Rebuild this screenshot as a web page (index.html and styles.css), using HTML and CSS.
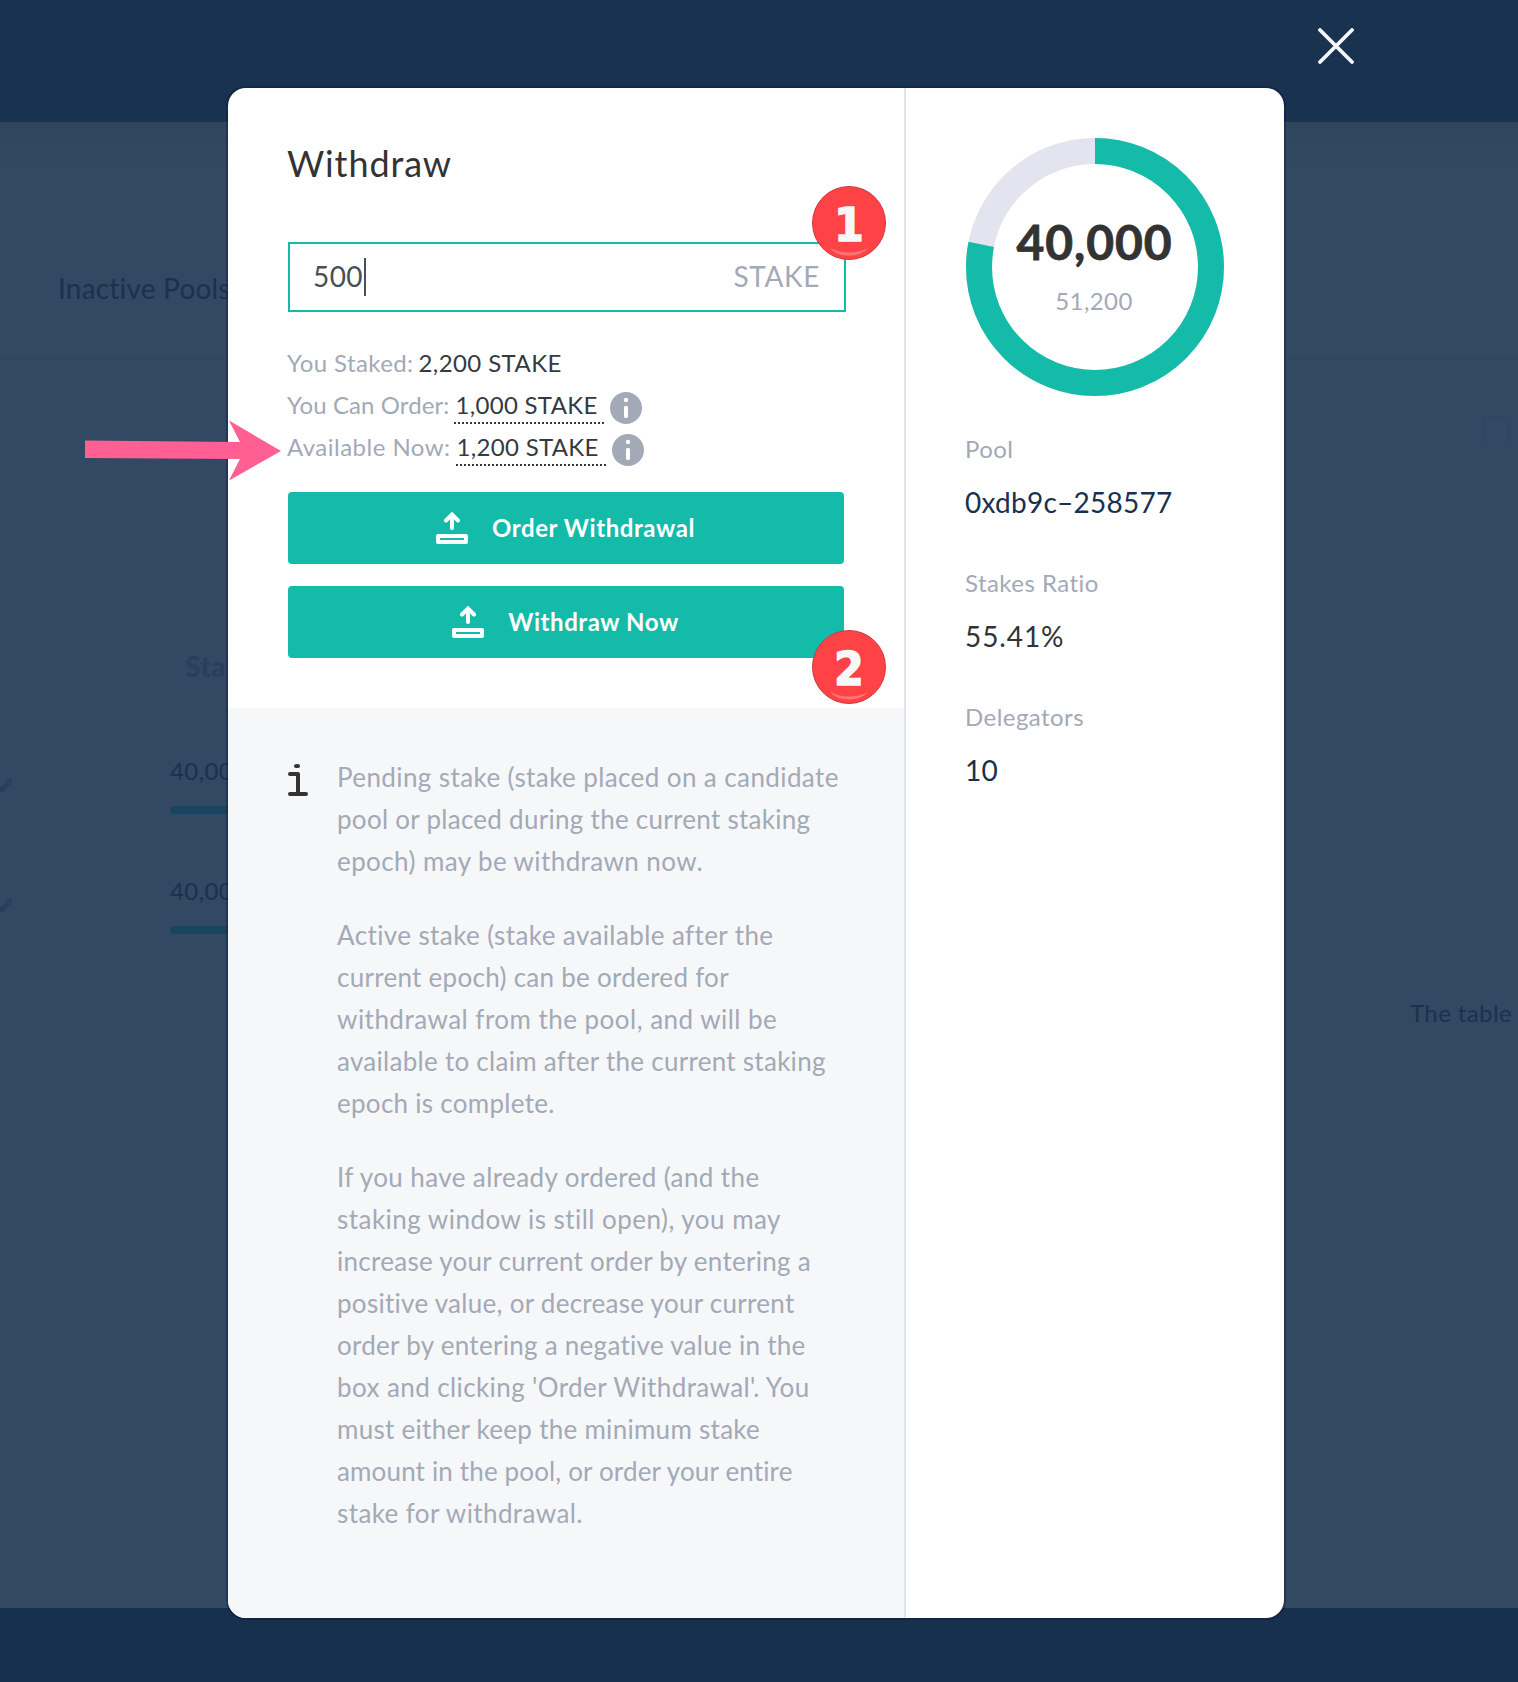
FILE: index.html
```html
<!DOCTYPE html>
<html lang="en">
<head>
<meta charset="utf-8">
<title>Withdraw</title>
<link rel="stylesheet" href="styles.css">
</head>
<body>
<div class="page">
  <header class="page-header"></header>
  <main class="page-main">
    <div class="tab">Inactive Pools</div>
    <div class="rule"></div>
    <div class="checkbox"></div>
    <div class="column-title">Stake</div>
    <div class="pool-row">
      <svg class="check" width="12" height="14" viewBox="0 0 12 14"><path d="M-4 6 L2 11 L10 2" fill="none" stroke="#293f5c" stroke-width="4.500" stroke-linecap="round" stroke-linejoin="round"/></svg>
      <div class="pool-amount">40,000<div class="bar"></div></div>
    </div>
    <div class="pool-row pool-row-next">
      <svg class="check" width="12" height="14" viewBox="0 0 12 14"><path d="M-4 6 L2 11 L10 2" fill="none" stroke="#293f5c" stroke-width="4.500" stroke-linecap="round" stroke-linejoin="round"/></svg>
      <div class="pool-amount">40,000<div class="bar"></div></div>
    </div>
    <div class="table-note">The table</div>
  </main>
  <footer class="page-footer"></footer>
</div>

<div class="overlay">
  <svg class="close" width="36" height="36" viewBox="0 0 36 36"><path d="M2 2 L34 34 M34 2 L2 34" stroke="#f6f7f9" stroke-width="3.8" stroke-linecap="round"/></svg>

  <div class="modal">
    <section class="left">
      <div class="form">
        <h1 class="title">Withdraw</h1>
        <div class="field">
          <span class="field-value">500</span><span class="caret"></span>
          <span class="field-unit">STAKE</span>
        </div>
        <div class="stats">
          <div class="stat"><span class="stat-label label-staked">You Staked:</span><span class="stat-value">2,200 STAKE</span></div>
          <div class="stat"><span class="stat-label label-order">You Can Order:</span><span class="stat-value dotted">1,000 STAKE</span>
            <svg class="info" width="32" height="32" viewBox="0 0 32 32"><circle cx="16" cy="16" r="16" fill="#a3a9b6"/><circle cx="16" cy="8" r="2.2" fill="#fff"/><rect x="14" y="14" width="4" height="12" rx="1.4" fill="#fff"/></svg></div>
          <div class="stat"><span class="stat-label label-available">Available Now:</span><span class="stat-value dotted">1,200 STAKE</span>
            <svg class="info" width="32" height="32" viewBox="0 0 32 32"><circle cx="16" cy="16" r="16" fill="#a3a9b6"/><circle cx="16" cy="8" r="2.2" fill="#fff"/><rect x="14" y="14" width="4" height="12" rx="1.4" fill="#fff"/></svg></div>
        </div>
        <div class="buttons">
          <button class="button">
            <svg width="32" height="32" viewBox="0 0 32 32" fill="none" stroke="#fff"><path d="M16 16 V3 M10 8.5 L16 2.5 L22 8.5" stroke-width="4" stroke-linecap="round"/><rect x="2" y="24" width="28" height="6" stroke-width="4" stroke-linejoin="round"/></svg>
            <span class="button-text">Order Withdrawal</span>
          </button>
          <button class="button">
            <svg width="32" height="32" viewBox="0 0 32 32" fill="none" stroke="#fff"><path d="M16 16 V3 M10 8.5 L16 2.5 L22 8.5" stroke-width="4" stroke-linecap="round"/><rect x="2" y="24" width="28" height="6" stroke-width="4" stroke-linejoin="round"/></svg>
            <span class="button-text">Withdraw Now</span>
          </button>
        </div>
      </div>
      <div class="notes">
        <svg class="notes-icon" width="20" height="32" viewBox="0 0 20 32"><ellipse cx="9" cy="2" rx="3" ry="2" fill="#333"/><path d="M2 10 H10 V30 M2 30 H18" fill="none" stroke="#333" stroke-width="4" stroke-linecap="round" stroke-linejoin="round"/></svg>
        <div class="notes-text">
          <p>Pending stake (stake placed on a candidate<br><span class="tight">pool or placed during the current staking</span><br>epoch) may be withdrawn now.</p>
          <p>Active stake (stake available after the<br><span class="tight">current epoch) can be ordered for</span><br><span class="loose">withdrawal from the pool, and will be</span><br><span class="tight">available to claim after the current staking<br>epoch is complete.</span></p>
          <p>If you have already ordered (and the<br><span class="loose">staking window is still open), you may</span><br><span class="tight">increase your current order by entering a<br>positive value, or decrease your current<br>order by entering a negative value in the</span><br>box and clicking 'Order Withdrawal'. You<br><span class="tight">must either keep the minimum stake</span><br><span class="tightest">amount in the pool, or order your entire</span><br>stake for withdrawal.</p>
        </div>
      </div>
      <div class="badge badge-one">
        <svg class="badge-shine" width="74" height="74" viewBox="0 0 74 74"><path d="M18 62 Q37 71 56 62 Q50 69.500 37 69.500 Q24 69.500 18 62Z" fill="#ff7373"/></svg>
        <span class="badge-digit">1</span>
      </div>
      <div class="badge badge-two">
        <svg class="badge-shine" width="74" height="74" viewBox="0 0 74 74"><path d="M18 62 Q37 71 56 62 Q50 69.500 37 69.500 Q24 69.500 18 62Z" fill="#ff7373"/></svg>
        <span class="badge-digit">2</span>
      </div>
    </section>
    <aside class="right">
      <svg class="donut" width="258" height="258" viewBox="0 0 258 258">
        <circle cx="129" cy="129" r="116" fill="none" stroke="#e4e4f0" stroke-width="26"/>
        <circle cx="129" cy="129" r="116" fill="none" stroke="#14bba8" stroke-width="26" pathLength="100" stroke-dasharray="78.125 100" transform="rotate(-90 129 129)"/>
        <text class="donut-total" x="128.500" y="122">40,000</text>
        <text class="donut-limit" x="128" y="172">51,200</text>
      </svg>
      <div class="fact"><div class="fact-label">Pool</div><div class="fact-value link">0xdb9c–258577</div></div>
      <div class="fact"><div class="fact-label">Stakes Ratio</div><div class="fact-value wide">55.41%</div></div>
      <div class="fact"><div class="fact-label">Delegators</div><div class="fact-value link">10</div></div>
    </aside>
  </div>

  <svg class="arrow" width="198" height="62" viewBox="0 0 198 62"><path d="M0 20.500 L155 22 L144 0.500 L196 31 L144 60.500 L155 39 L0 38Z" fill="#ff5f92"/></svg>
</div>
</body>
</html>
```
FILE: styles.css
```css
* { box-sizing: border-box; }

body {
  margin: 0;
  position: relative;
  width: 1518px;
  height: 1682px;
  overflow: hidden;
  font-family: Lato, "Open Sans", sans-serif;
  letter-spacing: 0.4px;
}

/* dimmed page behind the dialog */
.page {
  display: flex;
  flex-direction: column;
  height: 1682px;
  background: #334862;
}
.page-header { flex: none; height: 122px; background: #18324f; }
.page-footer { flex: none; height: 74px; background: #16304e; }
.page-main {
  flex: 1;
  display: flex;
  flex-direction: column;
  padding-top: 148px;
  background: linear-gradient(#30455f, #334862 60px);
  color: #1b3150;
  white-space: nowrap;
}
.tab { padding-left: 58px; font-size: 28px; line-height: 36px; letter-spacing: 0.2px; }
.rule { height: 2px; margin-top: 52px; background: #304661; }
.checkbox {
  align-self: flex-end;
  width: 27px;
  height: 27px;
  margin: 56px 8px 0 0;
  border: 1.5px solid #2d4462;
}
.column-title {
  margin-top: 205px;
  padding-left: 185px;
  font-size: 28px;
  line-height: 36px;
  font-weight: 900;
  color: #293f5e;
}
.pool-row { display: flex; margin-top: 72px; }
.pool-row-next { margin-top: 62px; }
.check { margin-top: 23px; }
.pool-amount {
  width: 200px;
  margin-left: 158px;
  font-size: 24px;
  line-height: 30px;
}
.bar { height: 8px; margin-top: 20px; border-radius: 4px; background: #1a4560; }
.table-note { margin-top: 64px; padding-left: 1410px; font-size: 24px; line-height: 30px; }

/* dialog */
.overlay { position: absolute; inset: 0; }
.close { position: absolute; left: 1318px; top: 28px; }
.modal {
  display: flex;
  width: 1056px;
  height: 1530px;
  margin: 88px 0 0 228px;
  border-radius: 18px;
  background: #fff;
  box-shadow: 0 0 0 2px rgba(12, 25, 55, 0.4);
}
.left {
  position: relative;
  display: flex;
  flex-direction: column;
  width: 676px;
}
.form { padding: 53px 58px 50px 60px; }
.title {
  margin: 0 0 0 -1px;
  font-size: 36px;
  line-height: 44px;
  font-weight: 400;
  letter-spacing: 0.9px;
  color: #333;
}
.field {
  display: flex;
  align-items: center;
  height: 70px;
  margin-top: 57px;
  padding: 0 24px 0 23px;
  border: 2px solid #14bba8;
  font-size: 28px;
}
.field-value { padding-bottom: 3px; color: #495057; }
.caret { width: 2px; height: 38px; margin-left: 1px; background: #495057; }
.field-unit { margin-left: auto; padding-bottom: 3px; letter-spacing: 0.6px; color: #a3a9b6; }

.stats { margin: 30px 0 0 -1px; font-size: 24px; line-height: 42px; }
.stat { display: flex; align-items: flex-start; height: 42px; }
.stat-label { color: #a3a9b6; }
.label-staked { letter-spacing: 0.4px; }
.label-order { letter-spacing: 0.1px; }
.label-available { letter-spacing: 0.48px; }
.stat-value { margin-left: 5px; color: #333a42; }
.dotted { width: 150px; height: 40px; padding-left: 1px; border-bottom: 2px dotted #333a42; letter-spacing: 0.3px; }
.info { margin: 8px 0 0 6px; }

.buttons { display: flex; flex-direction: column; gap: 22px; width: 556px; margin-top: 24px; }
.button {
  display: flex;
  align-items: center;
  justify-content: center;
  gap: 24px;
  height: 72px;
  padding: 0 1px 0 0;
  border: 0;
  border-radius: 4px;
  background: #14bba8;
  color: #fff;
  font: 700 24px/30px Lato, "Open Sans", sans-serif;
  letter-spacing: 0.57px;
}

.notes {
  flex: 1;
  display: flex;
  padding: 48px 0 0 60px;
  border-bottom-left-radius: 18px;
  background: #f6f7f9;
}
.notes-icon { flex: none; margin-top: 8px; }
.notes-text {
  margin-left: 29px;
  font-size: 26px;
  line-height: 42px;
  color: #a3a9b6;
  white-space: nowrap;
}
.notes-text p { margin: 0 0 32px; }
.tight { letter-spacing: 0.28px; }
.tightest { letter-spacing: 0.15px; }
.loose { letter-spacing: 0.47px; }

.right { width: 380px; padding: 50px 0 0 60px; border-left: 2px solid #e1e4ea; }
.donut { display: block; }
.donut text { text-anchor: middle; }
.donut-total { font-size: 48px; font-weight: 700; letter-spacing: 0.9px; fill: #333; stroke: #333; stroke-width: 0.8px; }
.donut-limit { font-size: 24px; fill: #a3a9b6; }
.fact { margin: 38px 0 48px -1px; }
.fact + .fact { margin-top: 0; }
.fact-label { font-size: 24px; line-height: 30px; letter-spacing: 0.45px; color: #a3a9b6; }
.fact-value { margin-top: 20px; font-size: 28px; line-height: 36px; letter-spacing: 0.25px; color: #333; }
.link { color: #17314f; }
.wide { letter-spacing: 0.9px; }

/* step markers */
.badge {
  position: absolute;
  left: 584px;
  display: flex;
  align-items: center;
  justify-content: center;
  width: 74px;
  height: 74px;
  border: 1.5px solid #c93a40;
  border-radius: 50%;
  background: #ff4245;
}
.badge-one { top: 98px; }
.badge-two { top: 542px; }
.badge-shine { position: absolute; left: -1px; top: -1px; }
.badge-digit {
  padding-top: 3px;
  font: 700 47px/71px "DejaVu Sans Condensed", "DejaVu Sans", sans-serif;
  letter-spacing: 0;
  color: #f8f8f8;
  -webkit-text-stroke: 1.6px #f8f8f8;
}
.arrow { position: absolute; left: 85px; top: 420px; }
```
